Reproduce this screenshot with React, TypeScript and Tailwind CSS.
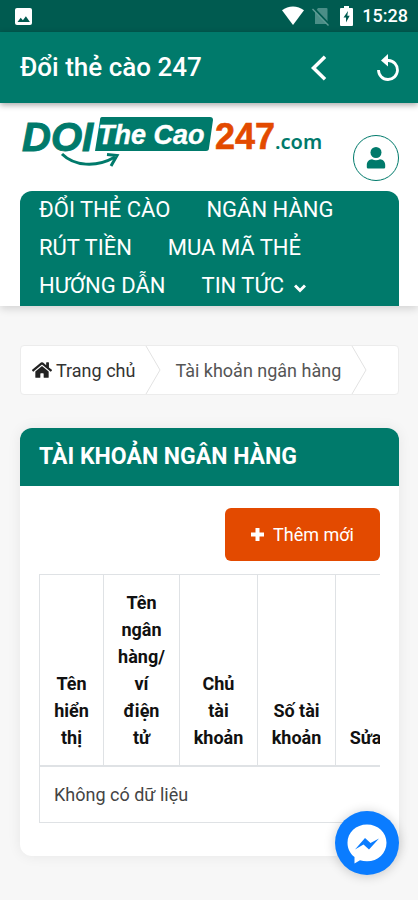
import { FaHome } from "react-icons/fa";

interface NavItem {
  label: string;
  hasMenu?: boolean;
}

const navItems: NavItem[] = [
  { label: "ĐỔI THẺ CÀO" },
  { label: "NGÂN HÀNG" },
  { label: "RÚT TIỀN" },
  { label: "MUA MÃ THẺ" },
  { label: "HƯỚNG DẪN" },
  { label: "TIN TỨC", hasMenu: true },
];

const columns = [
  { label: "Tên hiển thị", width: "w-16" },
  { label: "Tên ngân hàng/ ví điện tử", width: "w-[76px]" },
  { label: "Chủ tài khoản", width: "w-[78px]" },
  { label: "Số tài khoản", width: "w-[78px]" },
  { label: "Sửa", width: "w-[60px]" },
];

const StatusBar = () => (
  <div className="flex h-8 items-center justify-end bg-[#005b50] px-[10px] text-white">
    <svg className="mr-auto ml-1 h-[19px] w-[19px]" viewBox="0 0 19 19" aria-hidden="true">
      <rect x="1" y="1" width="17" height="17" rx="2" fill="#fff" />
      <path d="M3.5 15l3.2-4.2 2.2 2.4 3-4 4 5.8z" fill="#005b50" />
    </svg>
    <svg className="h-5 w-[22px]" viewBox="0 0 22 20" aria-hidden="true">
      <path d="M0 4.2C6.2-.9 15.8-.9 22 4.2L11 19z" fill="#fff" />
    </svg>
    <svg className="ml-2 h-[19px] w-[18px]" viewBox="0 0 18 19" aria-hidden="true">
      <path d="M6 1h8.5a1 1 0 0 1 1 1v15H3V5z" fill="#4b8e87" />
      <path d="M1.5 1l16 17" stroke="#005b50" strokeWidth="2.4" />
      <path d="M0.5 2l16 16.5" stroke="#5f9c95" strokeWidth="1.4" />
    </svg>
    <svg className="ml-[10px] h-[20px] w-[13px]" viewBox="0 0 13 20" aria-hidden="true">
      <path d="M4 0h5v2h3a1 1 0 0 1 1 1v16a1 1 0 0 1-1 1H1a1 1 0 0 1-1-1V3a1 1 0 0 1 1-1h3z" fill="#fff" />
      <path d="M8 5L3.5 11.5H6V16.5L9.7 9.7H7.3z" fill="#005b50" />
    </svg>
    <span className="ml-[9px] text-[18px] leading-8 font-medium">15:28</span>
  </div>
);

const AppBar = () => (
  <header className="relative z-10 flex h-[71px] items-center bg-[#007a6b] pr-[18px] pl-5 text-white shadow-[0_2px_6px_rgba(0,0,0,0.35)]">
    <h1 className="mr-auto text-[26px] font-medium">Đổi thẻ cào 247</h1>
    <button type="button" aria-label="Quay lại" className="mr-12">
      <svg className="h-[26px] w-[18px]" viewBox="0 0 18 26" fill="none" stroke="#fff" strokeWidth="3.5">
        <path d="M15 1.8L3.5 13 15 24.2" />
      </svg>
    </button>
    <button type="button" aria-label="Tải lại">
      <svg className="h-[28px] w-[24px]" viewBox="0 0 24 28" fill="none">
        <path d="M11 6.5h1.5A9.5 9.5 0 1 1 2.5 16" stroke="#fff" strokeWidth="2.8" />
        <path d="M12 0v12.5L5 6.5z" fill="#fff" />
      </svg>
    </button>
  </header>
);

const Logo = () => (
  <svg className="h-[54px] w-[302px] overflow-visible" viewBox="0 0 302 54" role="img" aria-label="DOI The Cao 247.com">
    <path d="M82 1h108q3 0 3 3l-4 28q0 3-3 3H75l5-31q0-3 2-3z" fill="#007a6b" />
    <g fontFamily="Liberation Sans, Arial, sans-serif" fontWeight="700">
      <text x="2" y="35" fontSize="40" fontStyle="italic" fill="#007a6b" stroke="#007a6b">
        DOI
      </text>
      <text x="78" y="28" fontSize="27" fontStyle="italic" fill="#fff" stroke="#fff" strokeWidth="0.4">
        The Cao
      </text>
      <text x="195" y="33" fontSize="36" fill="#e34a00" stroke="#e34a00" strokeWidth="0.6">
        247
      </text>
    </g>
    <text x="255" y="33" fontSize="20" fontFamily="Noto Sans, sans-serif" fontWeight="600" fill="#007a6b">
      .com
    </text>
    <g fill="none" stroke="#007a6b" strokeWidth="3">
      <path d="M42 38C54 50 76 52 95 41" />
      <path d="M87 38.5L97 39.5 91 50" />
    </g>
  </svg>
);

const SiteHeader = () => (
  <div className="bg-white pr-[19px] pl-5 shadow-[0_3px_8px_rgba(0,0,0,0.14)]">
    <div className="flex h-[88px] items-start justify-between pt-[13px]">
      <a href="#home">
        <Logo />
      </a>
      <button
        type="button"
        aria-label="Tài khoản"
        className="-ml-2 mt-[19px] flex h-[46px] w-[46px] shrink-0 items-center justify-center rounded-full border border-[#007a6b] text-[#007a6b]"
      >
        <svg className="h-[22px] w-5" viewBox="0 0 20 22" fill="currentColor">
          <circle cx="10" cy="5.5" r="5.5" />
          <path d="M6 12.2c2.500 1.300 5.500 1.300 8 0 3 .3 5.200 2.600 5.200 5.600V20.200a1.300 1.300 0 0 1-1.300 1.300H2.100A1.300 1.300 0 0 1 .8 20.200V17.800c0-3 2.200-5.300 5.200-5.600z" />
        </svg>
      </button>
    </div>
    <nav className="flex flex-wrap gap-x-9 rounded-t-xl bg-[#007a6b] px-[19px] pb-px text-[22px] leading-[38px] text-white">
      {navItems.map((item) => (
        <a key={item.label} href="#menu" className="flex items-center gap-[10px]">
          {item.label}
          {item.hasMenu && (
            <svg className="mt-1 h-3 w-3" viewBox="0 0 12 12" fill="none" stroke="#fff" strokeWidth="3">
              <path d="M1 3.5l5 5 5-5" />
            </svg>
          )}
        </a>
      ))}
    </nav>
  </div>
);

const CrumbArrow = () => (
  <svg className="h-12 w-4 shrink-0" viewBox="0 0 16 48" fill="none" stroke="#e2e2e2" aria-hidden="true">
    <path d="M1 0l14 24L1 48" />
  </svg>
);

const Breadcrumb = () => (
  <nav className="flex h-[50px] items-center rounded-sm border border-[#ececec] bg-white pl-[11px] text-[18px] text-[#333]">
    <a href="#home" className="mr-[10px] flex items-center gap-1">
      <FaHome className="h-5 w-5 text-[#222]" />
      Trang chủ
    </a>
    <CrumbArrow />
    <span className="mr-[10px] ml-[14px] text-[#555]">Tài khoản ngân hàng</span>
    <CrumbArrow />
  </nav>
);

const AccountTable = () => (
  <div className="overflow-hidden">
    <table className="w-[356px] table-fixed border-collapse border border-[#dfe2e5] text-[18px] leading-[27px]">
      <thead>
        <tr className="border-b-2 border-[#dfe2e5]">
          {columns.map((col) => (
            <th key={col.label} className={`${col.width} border-x border-[#dfe2e5] px-3 py-[14px] align-bottom font-bold text-[#111]`}>
              {col.label}
            </th>
          ))}
        </tr>
      </thead>
      <tbody>
        <tr>
          <td colSpan={columns.length} className="p-[14px] text-[#444]">
            Không có dữ liệu
          </td>
        </tr>
      </tbody>
    </table>
  </div>
);

export default function App() {
  return (
    <div className="min-h-screen bg-[#f7f7f7] font-[Roboto,sans-serif]">
      <StatusBar />
      <AppBar />
      <SiteHeader />
      <main className="pt-[39px] pr-[19px] pb-11 pl-5">
        <Breadcrumb />
        <section className="mt-[33px] rounded-xl bg-white shadow-[0_0_14px_rgba(0,0,0,0.07)]">
          <h2 className="rounded-t-xl bg-[#007a6b] px-[19px] text-[23px] leading-[58px] font-bold text-white">TÀI KHOẢN NGÂN HÀNG</h2>
          <div className="px-[19px] pt-[22px] pb-[33px]">
            <div className="mb-[13px] flex justify-end">
              <button
                type="button"
                className="flex h-[53px] items-center gap-[9px] rounded-md bg-[#e34a00] px-[26px] text-[18px] text-white"
              >
                <svg className="h-[13px] w-[13px]" viewBox="0 0 13 13" stroke="#fff" strokeWidth="4">
                  <path d="M6.5 0v13M0 6.5h13" />
                </svg>
                Thêm mới
              </button>
            </div>
            <AccountTable />
          </div>
        </section>
      </main>
      <button
        type="button"
        aria-label="Messenger"
        className="fixed right-[19px] bottom-[25px] h-16 w-16 rounded-full bg-[#0a7cff] shadow-[0_1px_12px_rgba(0,0,0,0.2)]"
      >
        <svg viewBox="0 0 64 64" className="h-16 w-16">
          <path
            d="M32 13.5c-11 0-19.5 8-19.5 18.2 0 6 2.6 10.8 7 14.3V52.5l5.5-3.2c2.2.6 4.5 1 7 1 11 0 19.5-8.3 19.5-18.6S43 13.5 32 13.5z"
            fill="#fff"
          />
          <path d="M20 38.5l10-11.5 5.5 5L44 27.5 34 38.5l-5.5-5z" fill="#0a7cff" />
        </svg>
      </button>
    </div>
  );
}
